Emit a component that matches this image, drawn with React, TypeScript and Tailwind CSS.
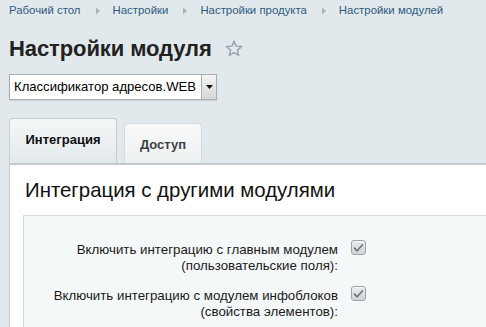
import React from "react";

function Arrow() {
  return (
    <svg width="6" height="8" viewBox="0 0 6 8" className="ml-[14px] mr-[12px]">
      <path d="M1 0.5 L5 4 L1 7.5 Z" fill="#a9b3b8" />
    </svg>
  );
}

function Check() {
  return (
    <div className="w-[15px] h-[15px] rounded-[3px] border border-[#9da5a9] bg-gradient-to-b from-[#e9ecee] to-[#cfd4d7] flex items-center justify-center shadow-[inset_0_1px_0_#f6f7f8]">
      <svg width="11" height="10" viewBox="0 0 11 10">
        <path d="M1.5 5.2 L4.2 7.8 L9.5 1.8" fill="none" stroke="#6a7276" strokeWidth="1.6" strokeLinejoin="round" strokeLinecap="round" />
      </svg>
    </div>
  );
}

export default function App() {
  return (
    <div
      className="w-[486px] h-[327px] overflow-hidden bg-[#e2e9ec] pl-[9px]"
      style={{ fontFamily: '"Liberation Sans", Arial, sans-serif' }}
    >
      <div className="flex items-center h-[20px] pt-[1px] text-[11.4px] text-[#2d5a82]">
        <span>Рабочий стол</span>
        <Arrow />
        <span>Настройки</span>
        <Arrow />
        <span>Настройки продукта</span>
        <Arrow />
        <span>Настройки модулей</span>
      </div>
      <div className="flex items-center h-[52px] pt-[4px]">
        <span className="text-[22px] font-bold text-[#222] tracking-[-0.1px]">Настройки модуля</span>
        <svg width="18" height="17" viewBox="0 0 24 23" className="ml-[13px] mt-[1px]">
          <path
            d="M12 1.5 L14.8 8.3 L22.2 8.9 L16.6 13.7 L18.3 20.9 L12 17.1 L5.7 20.9 L7.4 13.7 L1.8 8.9 L9.2 8.3 Z"
            fill="none"
            stroke="#9aa4aa"
            strokeWidth="2"
            strokeLinejoin="round"
          />
        </svg>
      </div>
      <div className="mt-[2px] flex w-[208px] h-[26px] border border-[#a7aeb2] bg-white shadow-[0_1px_1px_rgba(0,0,0,0.1)]">
        <div className="flex-1 flex items-center pl-[4px] text-[13.1px] text-black">Классификатор адресов.WEB</div>
        <div className="w-[15px] border-l border-[#a7aeb2] bg-gradient-to-b from-[#f4f4f4] to-[#d6d6d6] flex items-center justify-center">
          <svg width="7" height="4" viewBox="0 0 7 4">
            <path d="M0 0 H7 L3.5 4 Z" fill="#111" />
          </svg>
        </div>
      </div>
      <div className="mt-[18px] flex items-end h-[45px]">
        <div className="w-[108px] h-[45px] rounded-t-[4px] border border-b-0 border-[#c5cdd1] bg-gradient-to-b from-[#f4f7f8] to-[#e3e9eb] flex items-center justify-center text-[13px] font-bold text-[#111] pb-[2px]">
          Интеграция
        </div>
        <div className="ml-[7px] w-[78px] h-[40px] rounded-t-[4px] border border-b-0 border-[#d3d9dc] bg-gradient-to-b from-[#f8f9f9] to-[#eef1f2] flex items-center justify-center text-[13px] font-bold text-[#3c4348] pt-[2px]">
          Доступ
        </div>
      </div>
      <div className="h-[200px] bg-white border-t-2 border-l border-[#c3cacd] pl-[13px]">
        <div className="h-[50px] flex items-center pl-[2px] text-[20.4px] text-[#111]">Интеграция с другими модулями</div>
        <div className="bg-[#f5f8f9] border-t border-l border-[#d6dde0] h-[200px] pt-[24px]">
          <div className="flex flex-col gap-[12px]">
            <div className="flex items-start">
              <div className="w-[314px] pt-[2px] text-right text-[13.3px] leading-[16px] text-[#1a1a1a]">
                Включить интеграцию с главным модулем
                <br />
                (пользовательские поля):
              </div>
              <div className="ml-[13px]">
                <Check />
              </div>
            </div>
            <div className="flex items-start">
              <div className="w-[314px] pt-[2px] text-right text-[13.3px] leading-[16px] text-[#1a1a1a]">
                Включить интеграцию с модулем инфоблоков
                <br />
                (свойства элементов):
              </div>
              <div className="ml-[13px]">
                <Check />
              </div>
            </div>
          </div>
        </div>
      </div>
    </div>
  );
}
